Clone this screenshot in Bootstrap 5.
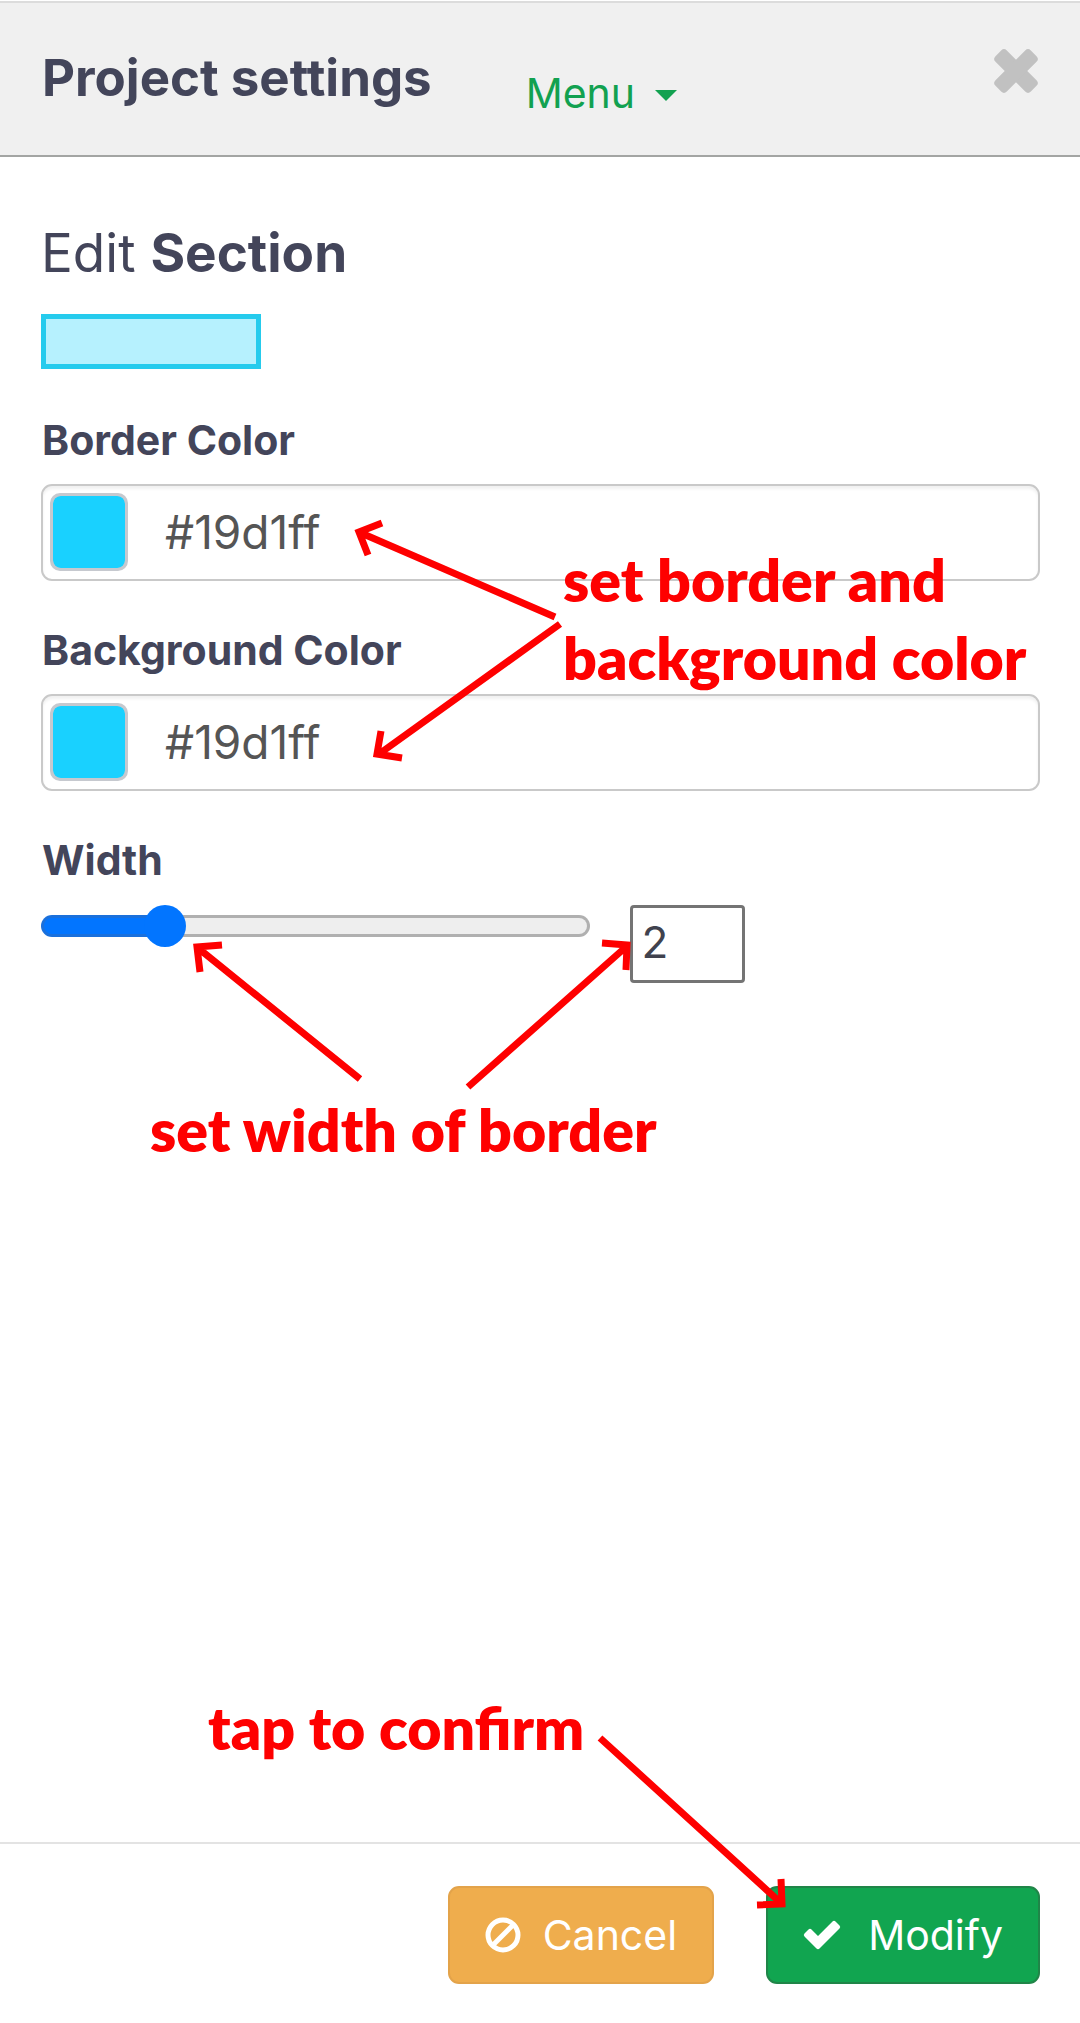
<!DOCTYPE html>
<html lang="en">
<head>
<meta charset="utf-8">
<meta name="viewport" content="width=device-width, initial-scale=1">
<title>Project settings</title>
<link href="https://cdn.jsdelivr.net/npm/bootstrap@5.3.0/dist/css/bootstrap.min.css" rel="stylesheet">
<style>
  body { font-family: Inter, sans-serif; color: #43455a; background: #fff; }
  .settings-head { background: #f0f0f0; border-top: 2px solid #dcdcdc; border-bottom: 2px solid #a3a5a3; margin-top: 1px; height: 156px; padding: 0 41px 0 42px; }
  .settings-title { font-size: 51px; line-height: 60px; font-weight: 700; padding-top: 45px; }
  .menu-toggle { font-size: 41px; line-height: 50px; color: #12a150; padding: 65px 0 0; margin-left: 94px; border: 0; background: none; gap: 20px; }
  .menu-toggle::after { border-top-width: 11px; border-left-width: 11px; border-right-width: 11px; margin: 4px 0 0; }
  .close-btn { border: 0; background: none; padding: 45px 0 0; line-height: 0; color: #c1c1c1; }
  .settings-body { padding: 64px 40px 0 41px; }
  .edit-title { font-size: 53px; line-height: 64px; margin-bottom: 29px; font-weight: 400; }
  .edit-title strong { font-weight: 700; }
  .section-preview { width: 220px; height: 55px; border: 5px solid #25cbed; background: #b6f1fe; margin-bottom: 46px; }
  .field-label { display: block; font-size: 41px; line-height: 50px; font-weight: 700; padding-left: 1px; }
  .color-field { height: 97px; border: 2px solid #c9c9c9; border-radius: 11px; box-shadow: inset 0 3px 3px rgba(0,0,0,.06); padding: 0 7px 2px; margin: 19px 0 44px; gap: 37px; }
  .swatch { -webkit-appearance: none; appearance: none; width: 78px; height: 78px; padding: 0; border: 3px solid #c6c9cf; border-radius: 10px; background: #c6c9cf; overflow: hidden; }
  .swatch::-webkit-color-swatch-wrapper { padding: 0; }
  .swatch::-webkit-color-swatch { border: 0; border-radius: 8px; }
  .hex-input { min-width: 0; border: 0; background: none; outline: 0; padding: 0; color: #555; font-size: 46px; line-height: 60px; }
  .width-row { gap: 40px; padding-top: 20px; }
  .width-range { -webkit-appearance: none; appearance: none; flex: 0 0 55%; height: 42px; margin: 0; background: none; }
  .width-range::-webkit-slider-runnable-track { height: 22px; border: 3px solid transparent; border-radius: 11px; background: linear-gradient(to right, #0275ff 20%, #eee 20%) padding-box, linear-gradient(to right, #1a70dc 20%, #b0b0b0 20%) border-box; }
  .width-range::-webkit-slider-thumb { -webkit-appearance: none; width: 42px; height: 42px; margin-top: -13px; border-radius: 50%; background: #0275ff; }
  .width-number { width: 115px; height: 78px; border: 3px solid #747474; border-radius: 4px; padding: 0 8px 4px; font-size: 44px; color: #40424e; appearance: textfield; }
  .width-number::-webkit-inner-spin-button { display: none; }
  .settings-foot { border-top: 2px solid #e3e3e3; padding: 42px 40px 39px; gap: 52px; }
  .foot-btn { height: 98px; border-radius: 11px; border-width: 2px; font-size: 41px; line-height: 50px; color: #fff; padding: 0 35px; }
  .foot-cancel { background: #efad4d; border-color: #e3a34a; gap: 22px; }
  .foot-modify { background: #11a550; border-color: #208548; gap: 27px; }
  .notes { inset: 0; pointer-events: none; font-family: Lato, sans-serif; }
  .note-arrows { left: 0; top: 0; width: 100%; height: 100%; }
  .note-text { color: #fe0000; font-size: 59px; line-height: 78px; font-weight: 800; white-space: nowrap; }
  .note-color { left: 563px; top: 541px; }
  .note-width { left: 150px; top: 1091px; }
  .note-confirm { left: 208px; top: 1689px; }
</style>
<script src="https://cdn.jsdelivr.net/npm/bootstrap@5.3.0/dist/js/bootstrap.bundle.min.js" defer></script>
</head>
<body>
<div class="position-relative d-flex flex-column min-vh-100 overflow-hidden">
  <header class="settings-head d-flex align-items-start">
    <h1 class="settings-title mb-0">Project settings</h1>
    <button type="button" class="menu-toggle dropdown-toggle d-flex align-items-center">Menu</button>
    <button type="button" class="close-btn ms-auto" aria-label="Close">
      <svg width="46" height="46" viewBox="-23 -23 46 46" fill="currentColor"><rect x="-25" y="-8" width="50" height="16" rx="4" transform="rotate(45)"/><rect x="-25" y="-8" width="50" height="16" rx="4" transform="rotate(-45)"/></svg>
    </button>
  </header>

  <main class="settings-body flex-grow-1">
    <h2 class="edit-title">Edit <strong>Section</strong></h2>
    <div class="section-preview"></div>

    <label class="field-label" for="borderHex">Border Color</label>
    <div class="color-field d-flex align-items-center">
      <input type="color" class="swatch flex-shrink-0" value="#19d1ff" aria-label="Pick border color">
      <input type="text" id="borderHex" class="hex-input flex-grow-1" value="#19d1ff">
    </div>

    <label class="field-label" for="backgroundHex">Background Color</label>
    <div class="color-field d-flex align-items-center">
      <input type="color" class="swatch flex-shrink-0" value="#19d1ff" aria-label="Pick background color">
      <input type="text" id="backgroundHex" class="hex-input flex-grow-1" value="#19d1ff">
    </div>

    <label class="field-label" for="widthRange">Width</label>
    <div class="width-row d-flex align-items-start">
      <input type="range" id="widthRange" class="width-range" min="0" max="10" value="2">
      <input type="number" class="width-number" value="2" aria-label="Width value">
    </div>
  </main>

  <footer class="settings-foot d-flex justify-content-end">
    <button type="button" class="btn foot-btn foot-cancel d-flex align-items-center">
      <svg width="36" height="36" viewBox="0 0 36 36" fill="none" stroke="currentColor" stroke-width="5"><circle cx="18" cy="18" r="15"/><path d="M28 8 8 28"/></svg>
      Cancel
    </button>
    <button type="button" class="btn foot-btn foot-modify d-flex align-items-center">
      <svg width="38" height="30" viewBox="0 0 38 30" fill="currentColor"><path d="M1.500 13.500 5.500 9.500Q7 8 8.500 9.500L15 16 29.500 1.500Q31 0 32.500 1.500L36.500 5.500Q38 7 36.500 8.500L16.500 28.500Q15 30 13.500 28.500L1.500 16.500Q0 15 1.500 13.500Z"/></svg>
      Modify
    </button>
  </footer>

  <div class="notes position-absolute">
    <svg class="note-arrows position-absolute" fill="none" stroke="#fe0000" stroke-width="7">
      <path d="M555 617 361 533M382 523 359 532 368 555"/>
      <path d="M560 624 379 754M381 731 377 754 402 758"/>
      <path d="M360 1079 198 948M222 945 197 947 200 972"/>
      <path d="M468 1087 627 946M602 943 627 945 626 970"/>
      <path d="M600 1738 781 1903M757 1905 782 1904 781 1879"/>
    </svg>
    <div class="note-text note-color position-absolute">set border and<br>background color</div>
    <div class="note-text note-width position-absolute">set width of border</div>
    <div class="note-text note-confirm position-absolute">tap to confirm</div>
  </div>
</div>
</body>
</html>
